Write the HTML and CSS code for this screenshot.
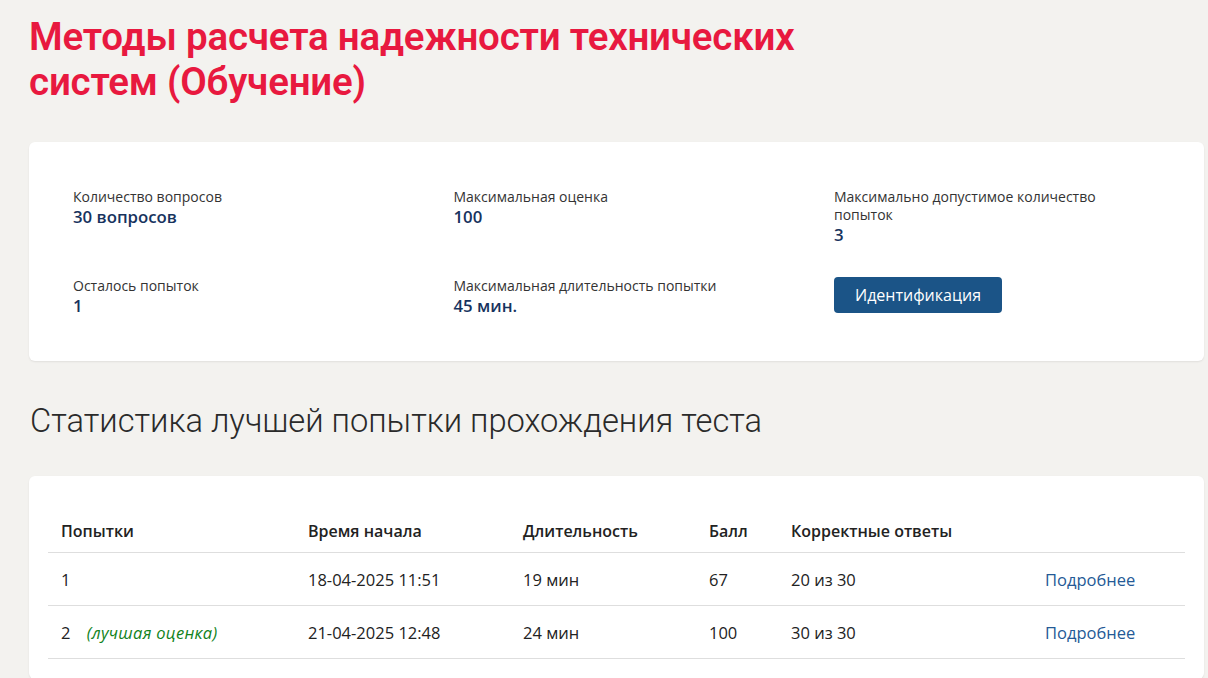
FILE: index.html
```html
<!DOCTYPE html>
<html lang="ru">

<head>
  <title>Методы расчета надежности технических систем (Обучение)</title>
  <meta charset="UTF-8">
  <meta name="viewport" content="width=device-width, initial-scale=1.0">
  <link rel="stylesheet" href="styles.css">
</head>

<body>
  <div class="page">
    <h1 class="title">Методы расчета надежности технических<br>систем (Обучение)</h1>

    <div class="card info">
      <div class="item">
        <div class="label">Количество вопросов</div>
        <div class="value">30 вопросов</div>
      </div>
      <div class="item">
        <div class="label">Максимальная оценка</div>
        <div class="value">100</div>
      </div>
      <div class="item">
        <div class="label">Максимально допустимое количество попыток</div>
        <div class="value">3</div>
      </div>
      <div class="item">
        <div class="label">Осталось попыток</div>
        <div class="value">1</div>
      </div>
      <div class="item">
        <div class="label">Максимальная длительность попытки</div>
        <div class="value">45 мин.</div>
      </div>
      <div class="item">
        <button class="button">Идентификация</button>
      </div>
    </div>

    <h2 class="subtitle">Статистика лучшей попытки прохождения теста</h2>

    <div class="card stats">
      <table class="attempts">
        <colgroup>
          <col class="c1">
          <col class="c2">
          <col class="c3">
          <col class="c4">
          <col class="c5">
          <col>
        </colgroup>
        <thead>
          <tr>
            <th>Попытки</th>
            <th>Время начала</th>
            <th>Длительность</th>
            <th>Балл</th>
            <th>Корректные ответы</th>
            <th></th>
          </tr>
        </thead>
        <tbody>
          <tr>
            <td>1</td>
            <td>18-04-2025 11:51</td>
            <td>19 мин</td>
            <td>67</td>
            <td>20 из 30</td>
            <td><a href="#" class="more">Подробнее</a></td>
          </tr>
          <tr>
            <td>2 <span class="best">(лучшая оценка)</span></td>
            <td>21-04-2025 12:48</td>
            <td>24 мин</td>
            <td>100</td>
            <td>30 из 30</td>
            <td><a href="#" class="more">Подробнее</a></td>
          </tr>
        </tbody>
      </table>
    </div>
  </div>
</body>

</html>
```

FILE: styles.css
```css
body {
  margin: 0;
  background-color: #f3f2ef;
  font-family: "Open Sans", "Noto Sans", sans-serif;
  color: #222;
}

.page {
  padding: 0 4px 40px 29px;
}

.title {
  margin: 0;
  padding-top: 14px;
  font-family: Roboto, sans-serif;
  font-size: 38.5px;
  font-weight: 600;
  line-height: 45px;
  color: #e8193f;
  letter-spacing: -0.2px;
}

.card {
  background-color: #fff;
  border-radius: 6px;
  box-shadow: 0 1px 2px rgba(0, 0, 0, .08);
}

.info {
  margin-top: 38px;
  padding: 46px 44px 45px 44px;
  display: grid;
  grid-template-columns: repeat(3, 300px);
  column-gap: 80.5px;
  row-gap: 32px;
}

.label {
  font-size: 14px;
  line-height: 18px;
  color: #333;
}

.value {
  font-size: 16.8px;
  font-weight: 600;
  line-height: 21px;
  color: #17335e;
}

.button {
  font-family: "Open Sans", "Noto Sans", sans-serif;
  font-size: 16px;
  color: #fff;
  background-color: #1b5487;
  border: none;
  border-radius: 4px;
  width: 168px;
  height: 36px;
  cursor: pointer;
}

.subtitle {
  margin: 40px 0 0 1px;
  font-family: Roboto, sans-serif;
  font-size: 32.7px;
  font-weight: 300;
  line-height: 40px;
  color: #2a2a2a;
}

.stats {
  margin-top: 35px;
  padding: 20px 19px 20px 19px;
}

.attempts {
  width: 100%;
  border-collapse: collapse;
  table-layout: fixed;
  font-size: 16.5px;
}

.c1 {
  width: 247px;
}

.c2 {
  width: 215px;
}

.c3 {
  width: 186px;
}

.c4 {
  width: 82px;
}

.c5 {
  width: 254px;
}

.attempts th {
  text-align: left;
  font-size: 16px;
  font-weight: 600;
  line-height: 20px;
  padding: 25px 13px 11px;
  border-bottom: 1px solid #dedede;
}

.attempts td {
  line-height: 21px;
  padding: 16px 13px 15px;
  border-bottom: 1px solid #dedede;
}

.best {
  margin-left: 12px;
  font-style: italic;
  font-size: 16.5px;
  letter-spacing: 0.3px;
  color: #11831c;
}

.more {
  color: #245a96;
  text-decoration: none;
}
```
